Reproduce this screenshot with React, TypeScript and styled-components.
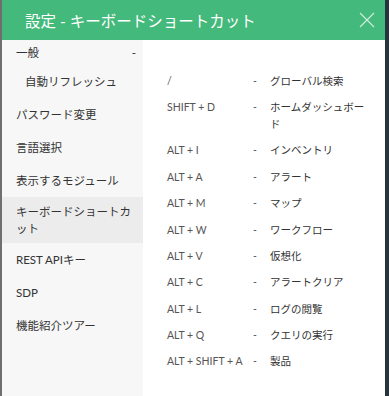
import React from "react";
import styled, { createGlobalStyle } from "styled-components";

const GlobalStyle = createGlobalStyle`
  html, body {
    margin: 0;
    padding: 0;
    background: #26343e;
  }
  body {
    font-family: Lato, "Noto Sans CJK JP", sans-serif;
  }
`;

// Outer frame: thin grey edge on the left, dark backdrop on the right
const Frame = styled.div`
  display: flex;
  width: 389px;
  height: 396px;
  border-left: 2px solid #6f6f6f;
  box-sizing: border-box;
`;

const Dialog = styled.div`
  width: 383px;
  height: 396px;
  display: flex;
  flex-direction: column;
  background: #ffffff;
`;

const Header = styled.div`
  height: 40px;
  flex-shrink: 0;
  display: flex;
  align-items: center;
  justify-content: space-between;
  padding: 0 8px 0 23px;
  background: #43b97b;
  color: #ffffff;
  font-size: 15.5px;
`;

const Title = styled.div`
  letter-spacing: 0;
`;

const CloseButton = styled.button`
  width: 20px;
  height: 20px;
  padding: 0;
  border: none;
  background: transparent;
  display: flex;
  align-items: center;
  justify-content: center;
`;

const Body = styled.div`
  flex: 1;
  display: flex;
  min-height: 0;
`;

const Sidebar = styled.div`
  width: 141px;
  flex-shrink: 0;
  background: #f7f7f7;
`;

const NavItem = styled.div<{ $active?: boolean; $indent?: boolean; $group?: boolean }>`
  display: flex;
  justify-content: space-between;
  align-items: center;
  padding: ${(p) => (p.$group ? "4px" : p.$active ? "6px" : "8px")} 7px
    ${(p) => (p.$group ? "4px" : p.$active ? "6px" : "8px")}
    ${(p) => (p.$indent ? "23px" : "14px")};
  line-height: 17px;
  font-size: 11.5px;
  color: #333333;
  background: ${(p) => (p.$active ? "#ececec" : "transparent")};
`;

const NavLabel = styled.span`
  flex: 1;
  padding-right: 3px;
`;

const Content = styled.div`
  flex: 1;
  padding: 28px 14px 0 24px;
`;

const ShortcutRow = styled.div`
  display: grid;
  grid-template-columns: 86px 17px 1fr;
  font-size: 10.5px;
  line-height: 17px;
  padding: 4.7px 0;
  color: #333333;
`;

const Keys = styled.span`
  color: #555555;
`;

const Dash = styled.span`
  color: #555555;
`;

const Desc = styled.span`
  max-width: 100px;
`;

const navItems: { label: string; indent?: boolean; active?: boolean; toggle?: string }[] = [
  { label: "一般", toggle: "-" },
  { label: "自動リフレッシュ", indent: true },
  { label: "パスワード変更" },
  { label: "言語選択" },
  { label: "表示するモジュール" },
  { label: "キーボードショートカット", active: true },
  { label: "REST APIキー" },
  { label: "SDP" },
  { label: "機能紹介ツアー" },
];

const shortcuts: [string, string][] = [
  ["/", "グローバル検索"],
  ["SHIFT + D", "ホームダッシュボード"],
  ["ALT + I", "インベントリ"],
  ["ALT + A", "アラート"],
  ["ALT + M", "マップ"],
  ["ALT + W", "ワークフロー"],
  ["ALT + V", "仮想化"],
  ["ALT + C", "アラートクリア"],
  ["ALT + L", "ログの閲覧"],
  ["ALT + Q", "クエリの実行"],
  ["ALT + SHIFT + A", "製品"],
];

export default function App() {
  return (
    <>
      <GlobalStyle />
      <Frame>
        <Dialog>
          <Header>
            <Title>設定 - キーボードショートカット</Title>
            <CloseButton aria-label="close">
              <svg width="16" height="16" viewBox="0 0 16 16">
                <path d="M1 1 L15 15 M15 1 L1 15" stroke="#d2eedd" strokeWidth="1.1" />
              </svg>
            </CloseButton>
          </Header>
          <Body>
            <Sidebar>
              {navItems.map((item) => (
                <NavItem
                  key={item.label}
                  $indent={item.indent}
                  $active={item.active}
                  $group={!!item.toggle}
                >
                  <NavLabel>{item.label}</NavLabel>
                  {item.toggle && <span>{item.toggle}</span>}
                </NavItem>
              ))}
            </Sidebar>
            <Content>
              {shortcuts.map(([keys, desc]) => (
                <ShortcutRow key={keys}>
                  <Keys>{keys}</Keys>
                  <Dash>-</Dash>
                  <Desc>{desc}</Desc>
                </ShortcutRow>
              ))}
            </Content>
          </Body>
        </Dialog>
      </Frame>
    </>
  );
}
